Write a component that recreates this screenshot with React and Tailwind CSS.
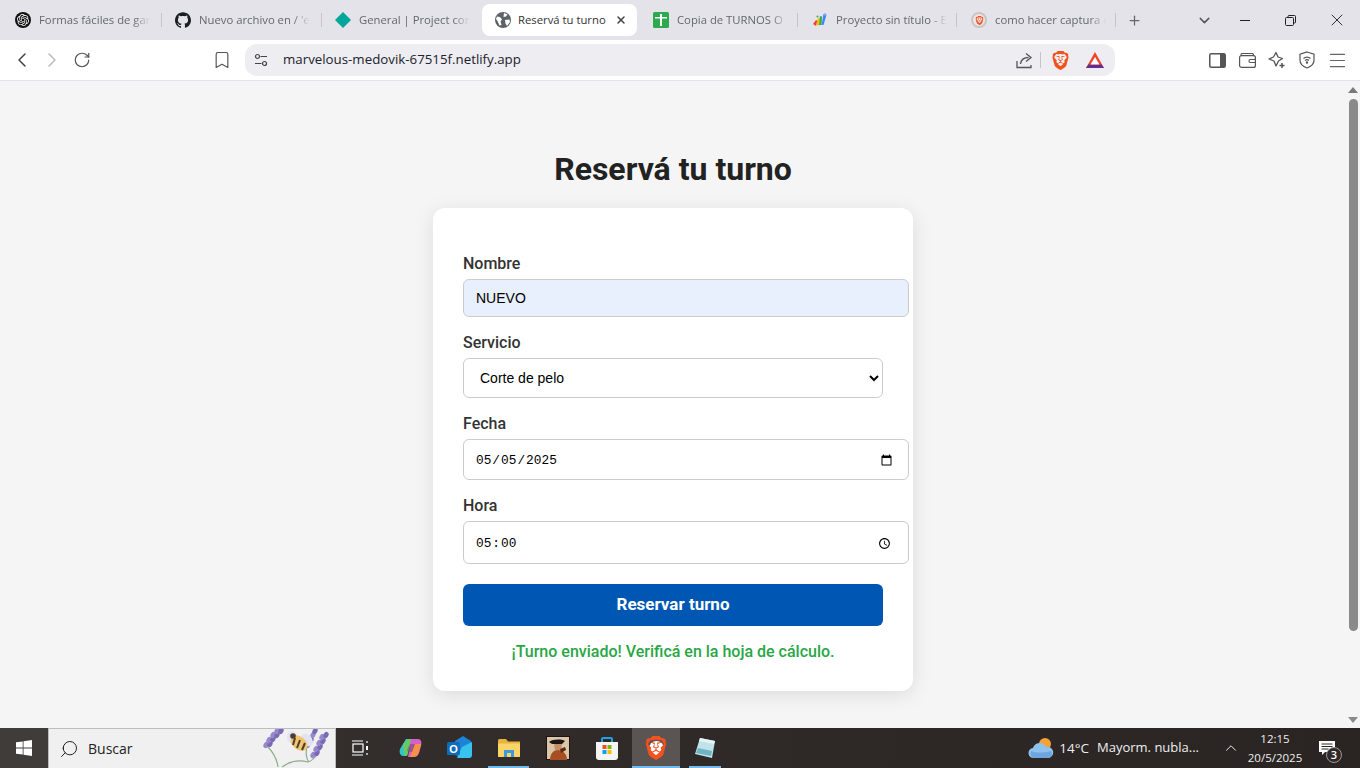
import React from 'react';
import { SiBrave, SiOpenai, SiGithub } from 'react-icons/si';
import { ChevronLeft, ChevronRight, RotateCw, Bookmark, Plus, ChevronDown, X, Menu, Search } from 'lucide-react';

const BraveLogo = ({ size = 20, color = '#f1511b' }) => <SiBrave size={size} color={color} />;

const TabIcons = {
  openai: (
    <span className="w-4 h-4 rounded-full bg-[#111] flex items-center justify-center">
      <SiOpenai size={12} color="#fff" />
    </span>
  ),
  github: <SiGithub size={16} color="#1b1f23" />,
  diamond: (
    <svg width="16" height="16" viewBox="0 0 16 16">
      <path d="M8 0l8 8-8 8-8-8z" fill="#00a69c" />
    </svg>
  ),
  globe: (
    <svg width="16" height="16" viewBox="0 0 16 16">
      <circle cx="8" cy="8" r="8" fill="#5f6368" />
      <path d="M2 4.500l3 .5 2 2.500-1.500 2 1 3.500-2 .5L2.500 9 1 7zM9 1l3.500 1.500L11 4.500 8.500 5zM10 8l4.500-.5.500 2.500-3 4-1.500-2.500z" fill="#fff" />
    </svg>
  ),
  sheet: (
    <svg width="16" height="16" viewBox="0 0 16 16">
      <rect width="16" height="16" rx="1.500" fill="#2da94f" />
      <path d="M7 2h2v3h5v1.500H9V14H7V6.500H2V5h5z" fill="#fff" />
    </svg>
  ),
  apps: (
    <svg width="16" height="16" viewBox="0 0 16 16">
      <path d="M1 12l3-4 2 1-2 5z" fill="#ea4335" />
      <path d="M4 13l2-7 2 .5-1 7z" fill="#fbbc04" />
      <path d="M7 13l1-9 2 .5-.5 8.500z" fill="#34a853" />
      <path d="M9.500 13l2-11 3 1-3 10z" fill="#4285f4" />
      <circle cx="5.500" cy="4.500" r="1" fill="#34a853" />
      <circle cx="13" cy="2.500" r="1.200" fill="#7baaf7" />
    </svg>
  ),
  braveTab: (
    <span className="w-4 h-4 rounded-full border-2 border-[#c9c5c4] bg-[#f3e3de] flex items-center justify-center">
      <BraveLogo size={9} color="#e8552b" />
    </span>
  ),
};

const Tab = ({ icon, title, className, separator = true }) => (
  <div className={`relative h-full flex items-center shrink-0 ${className}`}>
    {TabIcons[icon]}
    <span className="ml-2 w-[111px] overflow-hidden whitespace-nowrap text-[11.3px] text-[#66666e] [mask-image:linear-gradient(to_right,black_85%,transparent)]">
      {title}
    </span>
    {separator && <span className="absolute right-0 top-[13px] h-[14px] w-px bg-[#c4c4cb]" />}
  </div>
);

const TabStrip = () => (
  <div className="h-10 shrink-0 bg-[#e3e3e9] flex items-center font-['Open_Sans',sans-serif]">
    <Tab icon="openai" title="Formas fáciles de gana" className="w-[162px] pl-[15px]" />
    <Tab icon="github" title="Nuevo archivo en / 'e" className="w-[160px] pl-[13px]" />
    <Tab icon="diamond" title="General | Project con" className="w-[160px] pl-[13px]" separator={false} />
    <div className="h-8 w-[155px] shrink-0 bg-white rounded-lg flex items-center pl-[13px]">
      {TabIcons.globe}
      <span className="ml-[7px] w-[94px] whitespace-nowrap text-[11.3px] text-[#333338]">Reservá tu turno</span>
      <X size={12} strokeWidth={3} color="#444" className="ml-[3px]" />
    </div>
    <Tab icon="sheet" title="Copia de TURNOS O" className="w-[161px] pl-[16px]" />
    <Tab icon="apps" title="Proyecto sin título - E" className="w-[159px] pl-[14px]" />
    <Tab icon="braveTab" title="como hacer captura d" className="w-[159px] pl-[14px]" />
    <Plus size={15} color="#666" className="ml-[11px] shrink-0" />
    <ChevronDown size={17} color="#555" className="ml-[54px] shrink-0" />
    <span className="ml-[27px] w-[10px] h-px bg-[#222] shrink-0" />
    {/* restore button */}
    <svg width="11" height="11" viewBox="0 0 11 11" fill="none" stroke="#222" className="ml-[35px] shrink-0">
      <rect x="0.500" y="2.500" width="8" height="8" rx="1" />
      <path d="M3 2.500V1.500a1 1 0 0 1 1-1h5.500a1 1 0 0 1 1 1V7a1 1 0 0 1-1 1H8.500" />
    </svg>
    <X size={20} strokeWidth={1.100} color="#222" className="ml-[31px] shrink-0" />
  </div>
);

const Toolbar = () => (
  <div className="h-[41px] shrink-0 bg-white border-b border-[#e3e3e9] flex items-center">
    <ChevronLeft size={24} strokeWidth={1.500} color="#444" className="ml-[10px] shrink-0" />
    <ChevronRight size={24} strokeWidth={1.500} color="#bbb" className="ml-[6px] shrink-0" />
    <RotateCw size={18} strokeWidth={1.600} color="#555" className="ml-[9px] shrink-0" />
    <Bookmark size={20} strokeWidth={1.400} color="#555" className="ml-[121px] shrink-0" />
    <div className="ml-[13px] w-[870px] h-8 rounded-xl bg-[#ededf2] flex items-center shrink-0">
      <svg width="14" height="14" viewBox="0 0 14 14" fill="none" stroke="#444" strokeWidth="1.200" className="ml-[9px] shrink-0">
        <circle cx="3.500" cy="3.500" r="2" />
        <path d="M6.500 3.500H13M1 10.500h6.500" />
        <circle cx="10.500" cy="10.500" r="2" />
      </svg>
      <span className="ml-[15px] text-[13.3px] text-[#22222a] font-['Open_Sans',sans-serif] whitespace-nowrap">marvelous-medovik-67515f.netlify.app</span>
      <div className="ml-auto flex items-center">
        <svg width="17" height="17" viewBox="0 0 17 17" fill="none" stroke="#555" strokeWidth="1.300">
          <path d="M1 9v6.500h14V13" />
          <path d="M4.500 12c.5-4 3.500-6.500 8-6.500M10 1.500l5 4-5 4" />
        </svg>
        <span className="ml-[7px] w-px h-[16px] bg-[#c4c4cb]" />
        <span className="ml-[10px] flex"><BraveLogo size={19} /></span>
        <svg width="18" height="16" viewBox="0 0 18 16" className="ml-[16px] mr-[11px]">
          <path d="M9 0l9 16H0z" fill="#f0432a" />
          <path d="M0 16l2.500-3.500h13L18 16z" fill="#662d91" />
          <path d="M9 5l4.500 7.500h-9z" fill="#fff" />
        </svg>
      </div>
    </div>
    {/* sidebar toggle */}
    <svg width="17" height="15" viewBox="0 0 17 15" className="ml-[94px] shrink-0">
      <rect x="0.750" y="0.750" width="15.500" height="13.500" rx="1.500" fill="#fff" stroke="#555" strokeWidth="1.500" />
      <rect x="11" y="1" width="5" height="13" fill="#555" />
    </svg>
    <svg width="17" height="15" viewBox="0 0 17 15" fill="none" stroke="#555" strokeWidth="1.200" className="ml-[13px] shrink-0">
      <rect x="0.600" y="2.600" width="15.800" height="11.800" rx="2" />
      <path d="M2 2.500V2a1.500 1.500 0 0 1 1.500-1.500H13A1.500 1.500 0 0 1 14.500 2v.5M16 6.500h-4.500a1.500 1.500 0 0 0 0 3H16" />
    </svg>
    <svg width="18" height="18" viewBox="0 0 18 18" fill="none" stroke="#555" strokeWidth="1.300" className="ml-[12px] shrink-0">
      <path d="M8 1.500l2 4.500 4.500 1.500L10.500 10l-2.500 5-2-5L1 8l4.500-2z" strokeLinejoin="round" />
      <path d="M14 12v5M11.500 14.500h5" strokeWidth="1.500" />
    </svg>
    <svg width="16" height="18" viewBox="0 0 16 18" fill="none" stroke="#555" strokeWidth="1.200" className="ml-[13px] shrink-0">
      <path d="M8 1l7 2.200v6c0 3.800-3 6.300-7 7.800-4-1.500-7-4-7-7.800v-6z" />
      <path d="M4.500 7.500a5 5 0 0 1 7 0M6 9.500a3 3 0 0 1 4 0" />
      <circle cx="8" cy="11.500" r="0.600" fill="#555" />
    </svg>
    <Menu size={21} strokeWidth={1.400} color="#666" className="ml-[12px] shrink-0" />
  </div>
);

const Label = ({ children, className = '' }) => (
  <label className={`block h-[19px] leading-[19px] mb-[6px] text-[16px] font-medium text-[#333] ${className}`}>{children}</label>
);

const fieldClass = 'block border border-[#ccc] rounded-[6px] text-black outline-none';

const BookingForm = () => (
  <div className="flex-1 bg-[#f5f5f5] flex flex-col items-center font-['Roboto',sans-serif]">
    <h1 className="mt-[69px] h-[38px] leading-[38px] text-[32px] font-bold text-[#222]">Reservá tu turno</h1>
    <form className="mt-5 w-[480px] bg-white rounded-[12px] shadow-[0_4px_20px_rgba(0,0,0,0.1)] px-[30px] pt-[46px] pb-[30px]">
      <Label>Nombre</Label>
      <input
        type="text"
        defaultValue="NUEVO"
        className={`${fieldClass} w-[446px] h-[38px] pl-3 pr-3 bg-[#e8f0fe] text-[14px] font-['Liberation_Sans',sans-serif]`}
      />
      <Label className="mt-4">Servicio</Label>
      <select className={`${fieldClass} w-[420px] h-[40px] pl-3 pr-3 bg-white text-[14px] font-['Liberation_Sans',sans-serif]`} defaultValue="corte">
        <option value="corte">Corte de pelo</option>
        <option value="barba">Barba</option>
      </select>
      <Label className="mt-4">Fecha</Label>
      <input
        type="date"
        defaultValue="2025-05-05"
        className={`${fieldClass} w-[446px] h-[41px] pl-[11px] pr-[13px] pt-[2px] bg-white font-['Liberation_Mono',monospace] text-[12.8px]`}
      />
      <Label className="mt-4">Hora</Label>
      <input
        type="time"
        defaultValue="05:00"
        className={`${fieldClass} w-[446px] h-[43px] pl-[11px] pr-[14px] pt-[2px] bg-white font-['Liberation_Mono',monospace] text-[12.8px] [&::-webkit-datetime-edit-ampm-field]:hidden`}
      />
      <button type="button" className="mt-5 block w-[420px] h-[42px] rounded-[6px] bg-[#0057b3] text-white text-[17px] font-bold">
        Reservar turno
      </button>
      <p className="mt-4 h-[19px] leading-[19px] text-center text-[16px] font-medium text-[#28a745]">¡Turno enviado! Verificá en la hoja de cálculo.</p>
    </form>
  </div>
);

const Scrollbar = () => (
  <div className="w-[14px] shrink-0 bg-[#f5f5f5] flex flex-col items-center pt-[6px] pb-[5px]">
    <span className="w-0 h-0 border-x-[5px] border-x-transparent border-b-[6px] border-b-[#7a7a7a]" />
    <span className="mt-[6px] w-[9px] h-[532px] rounded-full bg-[#8a8a8a]" />
    <span className="mt-auto w-0 h-0 border-x-[5px] border-x-transparent border-t-[6px] border-t-[#8a8a8a]" />
  </div>
);

const Lavender = () => (
  <svg width="70" height="39" viewBox="0 0 70 39" className="shrink-0">
    <path d="M6 17c6 6 10 12 11 21M21 38c8-6 18-7 26-5 8-2 13-14 19-28M48 33c-2-2-4-8-2-16" fill="none" stroke="#8aae8d" strokeWidth="1.200" />
    {[[5, 16], [9, 15], [8, 11], [12, 10], [12, 6], [16, 6], [16, 2], [20, 2], [52, 26], [56, 24], [55, 20], [59, 18], [58, 14], [62, 12], [61, 8], [65, 6], [47, 16], [50, 11], [52, 6], [54, 2]].map(([x, y], i) => (
      <ellipse key={i} cx={x} cy={y} rx="2.400" ry="3.200" fill={i % 2 ? '#7a6ab6' : '#9788cc'} transform={`rotate(30 ${x} ${y})`} />
    ))}
    <ellipse cx="31" cy="8" rx="5" ry="6" fill="#dfe3f3" />
    <ellipse cx="46" cy="11" rx="5" ry="7" fill="#dfe3f3" transform="rotate(-40 46 11)" />
    <ellipse cx="38" cy="14" rx="9.500" ry="6.500" fill="#f2c46d" transform="rotate(40 38 14)" />
    <path d="M34 9l-2 7M39 11l-3 8M44 14l-3 7" stroke="#4a3c30" strokeWidth="2" />
    <circle cx="32" cy="7" r="2.800" fill="#4a3c30" />
  </svg>
);

const TaskApp = ({ children, active, running, className = 'w-[49px]' }) => (
  <div className={`relative h-10 flex items-center justify-center shrink-0 ${active ? 'bg-[#5a5452]' : ''} ${className}`}>
    {children}
    {running && <span className={`absolute bottom-0 h-[2px] bg-[#76b9ed] ${active ? 'inset-x-0' : 'inset-x-[4px]'}`} />}
  </div>
);

const Taskbar = () => (
  <div className="h-10 shrink-0 bg-gradient-to-r from-[#383331] via-[#2f2a28] to-[#2a2523] flex items-center text-white font-['Open_Sans',sans-serif]">
    <div className="w-12 h-10 bg-[#3f3c3a] flex items-center justify-center shrink-0">
      <svg width="16" height="16" viewBox="0 0 16 16" fill="#fff">
        <path d="M0 2.300l6.700-.9v6.200H0zM7.500 1.300L16 0v7.600H7.500zM0 8.400h6.700v6.200L0 13.700zM7.500 8.400H16V16l-8.500-1.300z" />
      </svg>
    </div>
    <div className="w-[288px] h-10 bg-[#f0f0f0] border border-[#bdbdbd] border-b-0 flex items-center justify-between pl-[10px] pr-[4px] shrink-0">
      <div className="flex items-center">
        <Search size={20} strokeWidth={1.200} color="#222" className="-scale-x-100" />
        <span className="ml-[9px] text-[14px] text-[#222]">Buscar</span>
      </div>
      <Lavender />
    </div>
    {/* task view */}
    <div className="w-[48px] flex justify-center shrink-0">
      <svg width="16" height="16" viewBox="0 0 16 16" fill="none" stroke="#fff" strokeWidth="1.200">
        <path d="M0 1h11M0 15h11" />
        <rect x="1" y="4" width="10" height="8" />
        <path d="M15 1v2M15 13v2" />
        <rect x="14" y="6" width="2" height="4" fill="#fff" stroke="none" />
      </svg>
    </div>
    <div className="ml-[2px] flex items-center">
      <TaskApp>
        <svg width="24" height="24" viewBox="0 0 24 24">
          <path d="M7 3h6l-5 17H4C1 20 0 16 1 13z" fill="#2ec4c9" />
          <path d="M4 8l5-5 4 1-5 16-3-1z" fill="#7bc950" opacity="0.800" />
          <path d="M12 3h7c3 0 4 3 3 7l-2 7c-1 3-3 4-6 4H9z" fill="#d65fc8" />
          <path d="M16 8h6l-2 8c-1 3-3 5-6 5h-3z" fill="#f59248" />
          <path d="M8 14l3-6h5l-3 8H9z" fill="#3c3735" opacity="0.350" />
        </svg>
      </TaskApp>
      <TaskApp>
        <svg width="25" height="24" viewBox="0 0 25 24">
          <path d="M8 5l8-5 8 5v12l-8 5-8-3z" fill="#1b84d8" />
          <path d="M15 11l10-5v13a3 3 0 0 1-3 3H10z" fill="#38c3ee" />
          <rect x="0" y="6" width="13" height="13" rx="1.500" fill="#0f6cbd" />
          <text x="6.500" y="16.500" textAnchor="middle" fontSize="11" fontWeight="700" fill="#fff" fontFamily="Liberation Sans, sans-serif">O</text>
        </svg>
      </TaskApp>
      <TaskApp running>
        <svg width="22" height="18" viewBox="0 0 22 18">
          <path d="M0 1.500A1.500 1.500 0 0 1 1.500 0H8l2 2.500h12V17a1 1 0 0 1-1 1H1a1 1 0 0 1-1-1z" fill="#e8b33f" />
          <path d="M0 4.500h22V17a1 1 0 0 1-1 1H1a1 1 0 0 1-1-1z" fill="#fbd468" />
          <path d="M6 18v-7h10v7h-3v-4H9v4z" fill="#3a9ae0" />
        </svg>
      </TaskApp>
      <TaskApp>
        <svg width="24" height="24" viewBox="0 0 24 24">
          <rect width="24" height="24" fill="#1b1412" />
          <rect x="1" y="1" width="22" height="22" fill="#d9c7a8" />
          <path d="M3 6c4-3 12-3 16-1l-3 3H6z" fill="#1d1715" />
          <path d="M8 8h8l-1 6H9z" fill="#c98f63" />
          <path d="M4 24c0-7 4-10 8-10s9 3 9 10z" fill="#a84f22" />
          <path d="M14 13l5-2 1 3-5 3z" fill="#5c2a13" />
        </svg>
      </TaskApp>
      <TaskApp>
        <svg width="24" height="25" viewBox="0 0 24 25">
          <path d="M7 7V3a1 1 0 0 1 1-1h8a1 1 0 0 1 1 1v4" fill="none" stroke="#1fa3e6" strokeWidth="2" />
          <path d="M1 6h22v15a3 3 0 0 1-3 3H4a3 3 0 0 1-3-3z" fill="#f4f4f4" />
          <rect x="7.500" y="9" width="4" height="4" fill="#f25022" />
          <rect x="12.500" y="9" width="4" height="4" fill="#7fba00" />
          <rect x="7.500" y="14" width="4" height="4" fill="#00a4ef" />
          <rect x="12.500" y="14" width="4" height="4" fill="#ffb900" />
        </svg>
      </TaskApp>
      <TaskApp active running className="w-[48px] ml-[1px]">
        {/* white sits behind the logo so the lion's face shows light */}
        <span className="relative flex items-center justify-center">
          <span className="absolute w-[15px] h-[15px] rounded-full bg-white" />
          <span className="relative flex"><BraveLogo size={24} color="#f4511e" /></span>
        </span>
      </TaskApp>
      <TaskApp running className="ml-[5px] w-[40px]">
        <svg width="22" height="24" viewBox="0 0 22 24">
          <path d="M6 2l15 3-3 17L1 18z" fill="#bfe3e8" />
          <path d="M6 2l15 3-1 3L5 5z" fill="#e6f3f5" />
          <path d="M4 12l14 3-1 5L2 17z" fill="#6fb3c4" />
        </svg>
      </TaskApp>
    </div>
    <div className="ml-auto flex items-center">
      {/* weather */}
      <svg width="26" height="22" viewBox="0 0 26 22">
        <circle cx="17" cy="7" r="6" fill="#f3a233" />
        <path d="M6 21a5 5 0 0 1-1-10 7 7 0 0 1 13-1 5 5 0 0 1 3 11z" fill="#8fc1ee" />
        <path d="M3 14c5 2 13 2 20 0 2 3 0 7-3 7H6c-3 0-4-4-3-7z" fill="#6fa5dd" />
      </svg>
      <span className="ml-[5px] text-[13.500px] text-[#eee] whitespace-nowrap">14°C</span>
      <span className="ml-[8px] w-[103px] text-[13px] text-[#eee] whitespace-nowrap">Mayorm. nubla...</span>
      <ChevronDown size={18} strokeWidth={1.300} color="#eee" className="ml-[22px] rotate-180" />
      <div className="ml-[5px] w-[60px] flex flex-col items-center text-[11.5px] leading-[19px] text-[#eee]">
        <span>12:15</span>
        <span>20/5/2025</span>
      </div>
      <div className="relative ml-[14px] mr-[25px] w-[16px] h-[15px]">
        <svg width="16" height="15" viewBox="0 0 16 15">
          <path d="M0 0h16v11H6l-3 3v-3H0z" fill="#fff" />
          <path d="M2.500 3h11M2.500 5.500h11M2.500 8h7" stroke="#2f2a28" strokeWidth="1" />
        </svg>
        <span className="absolute left-[7px] top-[6px] w-[16px] h-[16px] rounded-full border border-[#999] bg-[#2f2a28] flex items-center justify-center text-[11px] leading-none font-semibold">3</span>
      </div>
    </div>
  </div>
);

export default function App() {
  return (
    <div className="h-screen w-screen flex flex-col overflow-hidden bg-[#f5f5f5]">
      <TabStrip />
      <Toolbar />
      <main className="flex-1 flex min-h-0">
        <BookingForm />
        <Scrollbar />
      </main>
      <Taskbar />
    </div>
  );
}
